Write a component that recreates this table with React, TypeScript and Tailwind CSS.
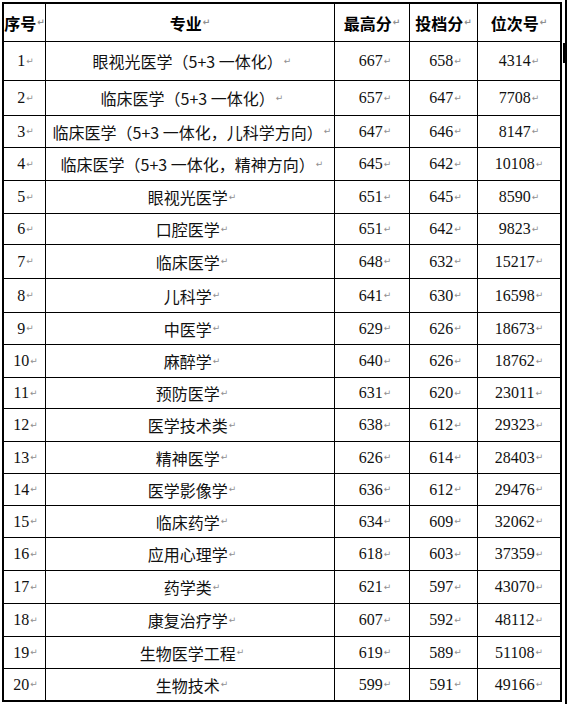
import React from "react";

type Row = { n: number; name: string; max: number; tou: number; rank: number; h: string };

const rows: Row[] = [
  { n: 1, name: "眼视光医学（5+3 一体化）", max: 667, tou: 658, rank: 4314, h: "h-[39px]" },
  { n: 2, name: "临床医学（5+3 一体化）", max: 657, tou: 647, rank: 7708, h: "h-[35px]" },
  { n: 3, name: "临床医学（5+3 一体化，儿科学方向）", max: 647, tou: 646, rank: 8147, h: "h-[32px]" },
  { n: 4, name: "临床医学（5+3 一体化，精神方向）", max: 645, tou: 642, rank: 10108, h: "h-[33px]" },
  { n: 5, name: "眼视光医学", max: 651, tou: 645, rank: 8590, h: "h-[33px]" },
  { n: 6, name: "口腔医学", max: 651, tou: 642, rank: 9823, h: "h-[31px]" },
  { n: 7, name: "临床医学", max: 648, tou: 632, rank: 15217, h: "h-[34px]" },
  { n: 8, name: "儿科学", max: 641, tou: 630, rank: 16598, h: "h-[34px]" },
  { n: 9, name: "中医学", max: 629, tou: 626, rank: 18673, h: "h-[32px]" },
  { n: 10, name: "麻醉学", max: 640, tou: 626, rank: 18762, h: "h-[33px]" },
  { n: 11, name: "预防医学", max: 631, tou: 620, rank: 23011, h: "h-[31px]" },
  { n: 12, name: "医学技术类", max: 638, tou: 612, rank: 29323, h: "h-[33px]" },
  { n: 13, name: "精神医学", max: 626, tou: 614, rank: 28403, h: "h-[32px]" },
  { n: 14, name: "医学影像学", max: 636, tou: 612, rank: 29476, h: "h-[32px]" },
  { n: 15, name: "临床药学", max: 634, tou: 609, rank: 32062, h: "h-[32px]" },
  { n: 16, name: "应用心理学", max: 618, tou: 603, rank: 37359, h: "h-[33px]" },
  { n: 17, name: "药学类", max: 621, tou: 597, rank: 43070, h: "h-[33px]" },
  { n: 18, name: "康复治疗学", max: 607, tou: 592, rank: 48112, h: "h-[33px]" },
  { n: 19, name: "生物医学工程", max: 619, tou: 589, rank: 51108, h: "h-[32px]" },
  { n: 20, name: "生物技术", max: 599, tou: 591, rank: 49166, h: "h-[31px]" },
];

const Mark = () => (
  <span className="font-['DejaVu_Sans',sans-serif] text-[9px] text-[#8f8f8f] ml-[1px] leading-none">↵</span>
);

const cjk = "font-['Noto_Sans_CJK_SC',sans-serif]";
const num = "font-['Liberation_Serif',serif] text-[16px] text-[#111]";

export default function App() {
  return (
    <div className="bg-white w-[568px] h-[704px] pt-[2px] pl-[2px] flex">
      <div className="w-[560px] h-[700px] border-2 border-black flex flex-col">
        <div className="grid grid-cols-[42px_289px_75px_68px_82px] h-[38px] border-b border-black">
          <div className={`border-r border-black flex items-center justify-center ${cjk} text-[16px] font-bold text-black`}>
            <span>序号</span>
            <Mark />
          </div>
          <div className={`border-r border-black flex items-center justify-center ${cjk} text-[16px] font-bold text-black`}>
            <span>专业</span>
            <Mark />
          </div>
          <div className={`border-r border-black flex items-center justify-center ${cjk} text-[16px] font-bold text-black`}>
            <span>最高分</span>
            <Mark />
          </div>
          <div className={`border-r border-black flex items-center justify-center ${cjk} text-[16px] font-bold text-black`}>
            <span>投档分</span>
            <Mark />
          </div>
          <div className={`flex items-center justify-center ${cjk} text-[16px] font-bold text-black`}>
            <span>位次号</span>
            <Mark />
          </div>
        </div>
        {rows.map((r, i) => (
          <div
            key={r.n}
            className={`grid grid-cols-[42px_289px_75px_68px_82px] ${r.h} ${i < rows.length - 1 ? "border-b border-black" : ""}`}
          >
            <div className={`border-r border-black flex items-center justify-center pl-[2px] ${num}`}>
              <span>{r.n}</span>
              <Mark />
            </div>
            <div className={`border-r border-black flex items-center justify-center pl-[4px] ${cjk} text-[16px] text-[#111] whitespace-nowrap`}>
              <span>{r.name}</span>
              <Mark />
            </div>
            <div className={`border-r border-black flex items-center justify-center pl-[6px] ${num}`}>
              <span>{r.max}</span>
              <Mark />
            </div>
            <div className={`border-r border-black flex items-center justify-center pl-[4px] ${num}`}>
              <span>{r.tou}</span>
              <Mark />
            </div>
            <div className={`flex items-center justify-center ${num}`}>
              <span>{r.rank}</span>
              <Mark />
            </div>
          </div>
        ))}
      </div>
      <div className="relative w-[5px] h-[704px] -mt-[2px] flex justify-end">
        <div className="w-[2px] h-full bg-black" />
        <div className="absolute left-[1px] top-[43px] w-[4px] h-[20px] bg-black" />
      </div>
    </div>
  );
}
